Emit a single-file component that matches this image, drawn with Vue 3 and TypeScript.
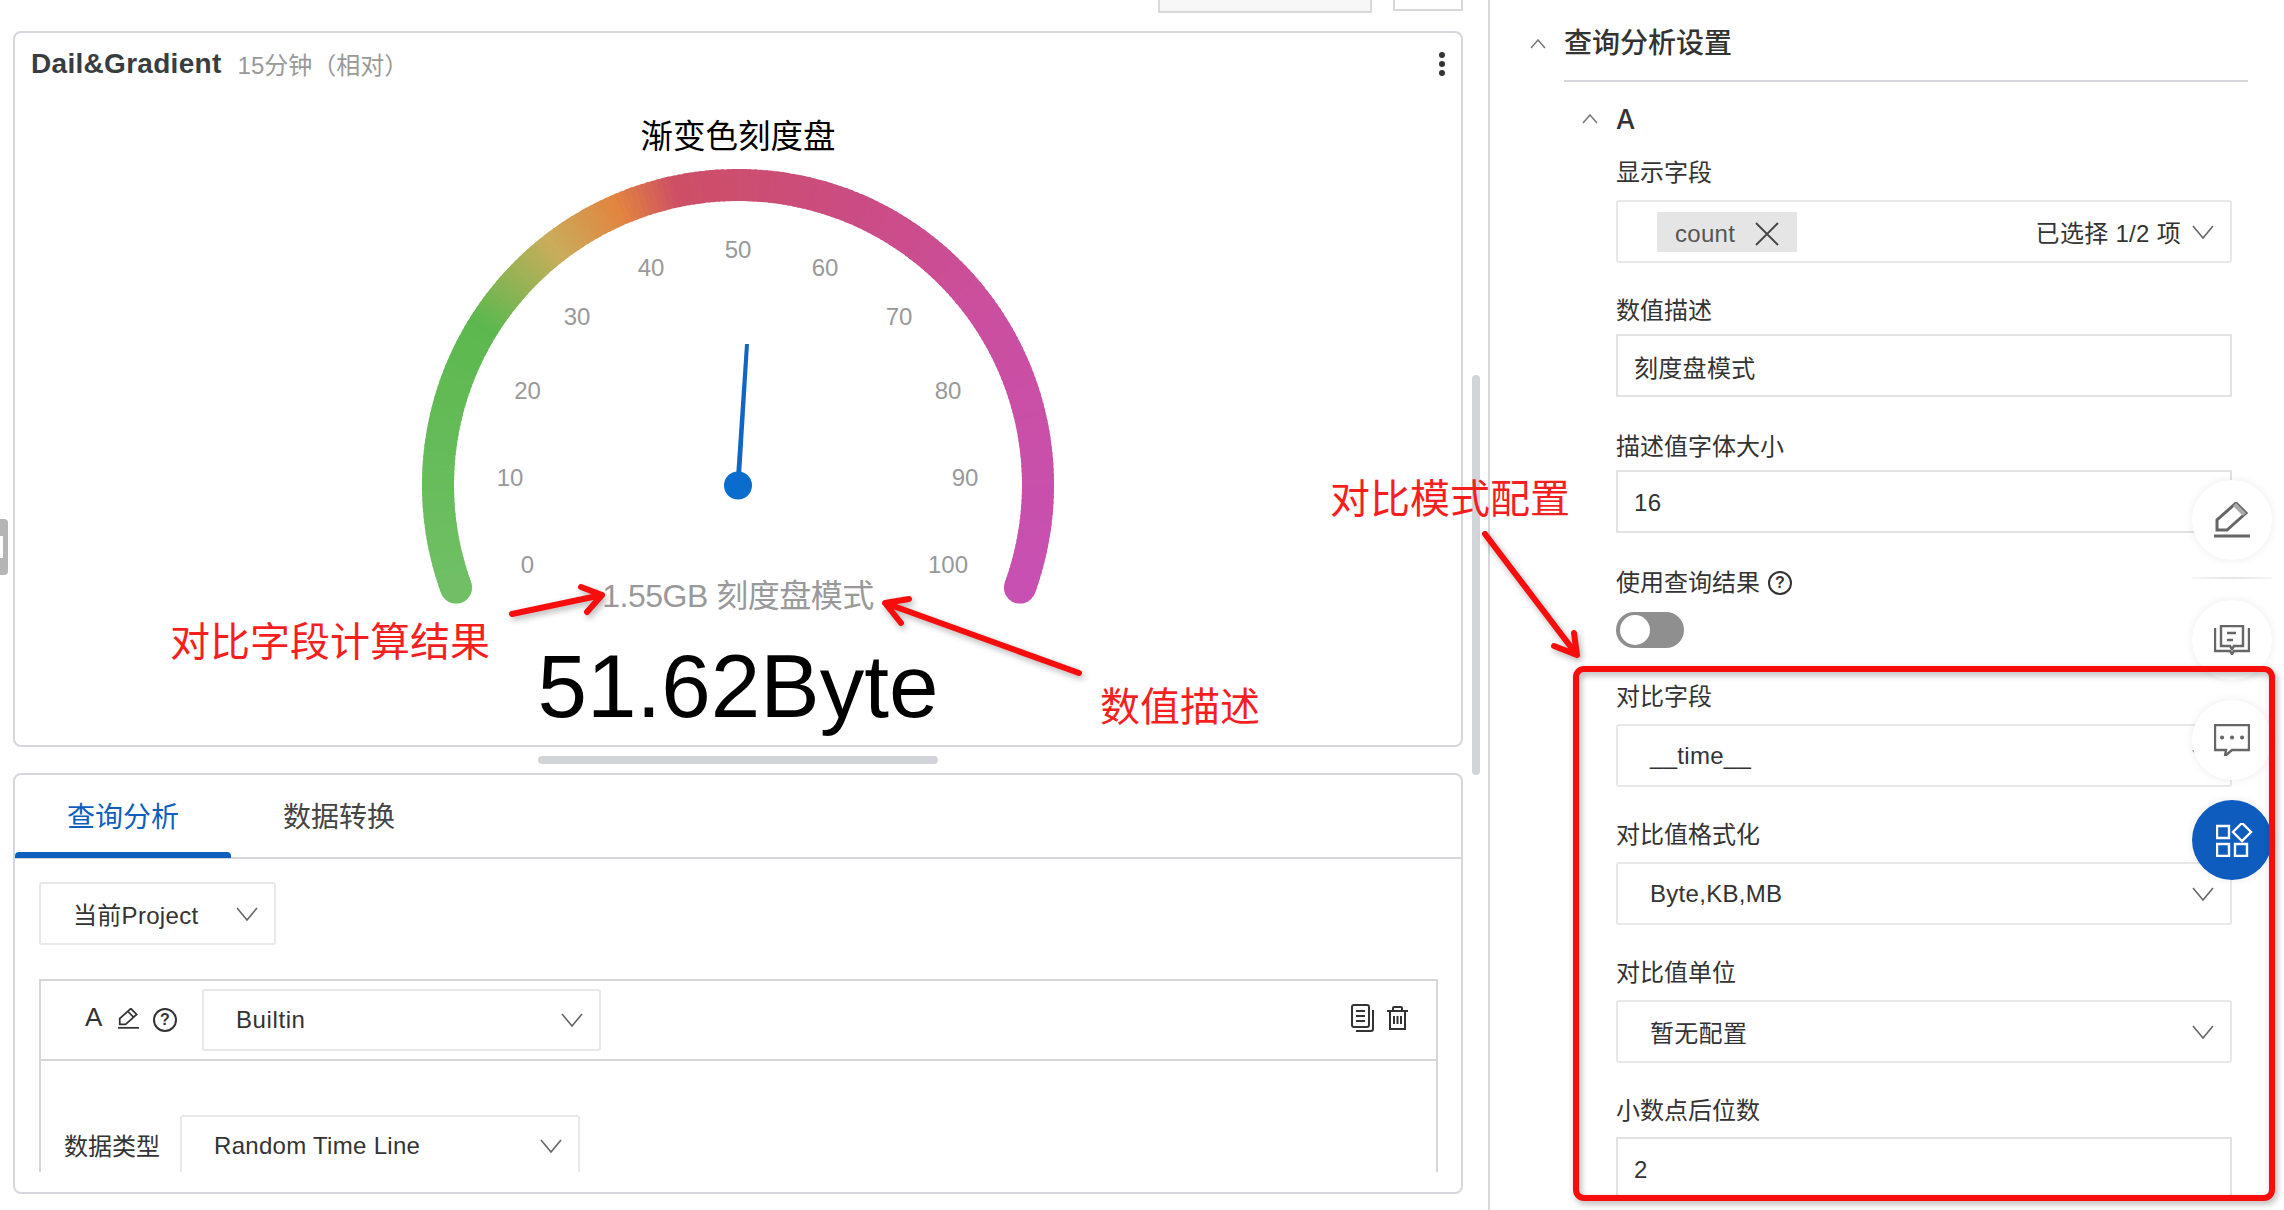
<script setup lang="ts">
import { computed } from 'vue';

interface FormField {
  label: string;
  kind: 'select' | 'input';
  value: string;
}

const ticks = [
  { label: '0', x: 527.5, y: 564 },
  { label: '10', x: 510, y: 477.5 },
  { label: '20', x: 527.5, y: 390.5 },
  { label: '30', x: 577, y: 316 },
  { label: '40', x: 651, y: 267.5 },
  { label: '50', x: 738, y: 249.5 },
  { label: '60', x: 825, y: 267.5 },
  { label: '70', x: 899, y: 316 },
  { label: '80', x: 948, y: 390.5 },
  { label: '90', x: 965, y: 477.5 },
  { label: '100', x: 948, y: 564 },
];

const upperFields: FormField[] = [
  { label: '数值描述', kind: 'input', value: '刻度盘模式' },
  { label: '描述值字体大小', kind: 'input', value: '16' },
];

const compareFields: FormField[] = [
  { label: '对比字段', kind: 'select', value: '__time__' },
  { label: '对比值格式化', kind: 'select', value: 'Byte,KB,MB' },
  { label: '对比值单位', kind: 'select', value: '暂无配置' },
  { label: '小数点后位数', kind: 'input', value: '2' },
];

// gauge sweep: 200deg to -20deg
const CX = 738;
const CY = 485;
const R = 300;

const stops: [number, number[]][] = [
  [0, [112, 191, 101]],
  [0.235, [92, 184, 78]],
  [0.325, [201, 173, 91]],
  [0.392, [226, 132, 63]],
  [0.444, [205, 79, 101]],
  [0.586, [203, 76, 128]],
  [0.75, [203, 79, 159]],
  [1, [199, 80, 178]],
];

function colorAt(t: number) {
  let i = 0;
  while (i < stops.length - 2 && t > stops[i + 1][0]) i++;
  const [t0, c0] = stops[i];
  const [t1, c1] = stops[i + 1];
  const k = (t - t0) / (t1 - t0);
  const mix = c0.map((c, n) => Math.round(c + (c1[n] - c) * k));
  return `rgb(${mix.join(',')})`;
}

function point(deg: number) {
  const a = (deg * Math.PI) / 180;
  return { x: CX + R * Math.cos(a), y: CY - R * Math.sin(a) };
}

const arcStart = point(200);
const arcEnd = point(-20);

const segments = computed(() => {
  const count = 220;
  return Array.from({ length: count }, (_, i) => {
    const from = point(200 - (220 * i) / count);
    const to = point(200 - (220 * Math.min(i + 1.4, count)) / count);
    return {
      d: `M${from.x.toFixed(2)} ${from.y.toFixed(2)}A${R} ${R} 0 0 1 ${to.x.toFixed(2)} ${to.y.toFixed(2)}`,
      color: colorAt(i / count),
    };
  });
});
</script>

<template>
  <div class="page">
    <div class="left">
      <div class="toolbar">
        <div class="stub stub-wide" />
        <div class="stub stub-small" />
      </div>

      <section class="chart-card">
        <header class="chart-head">
          <span class="chart-title">Dail&amp;Gradient</span>
          <span class="chart-range">15分钟（相对）</span>
          <span class="dots"><i /><i /><i /></span>
        </header>
        <svg class="gauge" viewBox="15 100 1445 645">
          <text class="gauge-name" x="738" y="148" text-anchor="middle">渐变色刻度盘</text>
          <path v-for="(s, i) in segments" :key="i" :d="s.d" :stroke="s.color" stroke-width="32" fill="none" />
          <circle :cx="arcStart.x" :cy="arcStart.y" r="16" :fill="colorAt(0)" />
          <circle :cx="arcEnd.x" :cy="arcEnd.y" r="16" :fill="colorAt(1)" />
          <text
            v-for="t in ticks"
            :key="t.label"
            class="tick"
            :x="t.x"
            :y="t.y + 8.5"
            text-anchor="middle"
          >{{ t.label }}</text>
          <polygon points="735.5,485 740.5,485 749,344 745,344" fill="#1166c4" />
          <circle cx="738" cy="485.5" r="14" fill="#0a6ccc" />
          <text class="gauge-sub" x="738" y="607" text-anchor="middle">1.55GB 刻度盘模式</text>
          <text class="gauge-value" x="738" y="717" text-anchor="middle">51.62Byte</text>
        </svg>
      </section>

      <div class="hscroll" />

      <section class="query-card">
        <nav class="tabs">
          <span class="tab active">查询分析</span>
          <span class="tab">数据转换</span>
        </nav>
        <div class="query-body">
          <div class="select project">
            <span>当前Project</span>
            <svg class="chevron" viewBox="0 0 22 14"><path d="M1 1l10 12L21 1" /></svg>
          </div>
          <div class="query-box">
            <div class="query-row">
              <span class="query-name">A</span>
              <svg class="pencil small" viewBox="0 0 36 36">
                <path d="M3 28V18L22 1l10 10-19 17z" />
                <path d="M17 6l10 10" />
                <path d="M0 34h36" />
              </svg>
              <span class="help">?</span>
              <div class="select builtin">
                <span>Builtin</span>
                <svg class="chevron" viewBox="0 0 22 14"><path d="M1 1l10 12L21 1" /></svg>
              </div>
              <svg class="row-icon copy" viewBox="0 0 24 28">
                <rect x="1" y="1" width="17" height="22" rx="2" />
                <path d="M5 7h9M5 12h9M5 17h9" />
                <path d="M22 6v19a2 2 0 0 1-2 2H5" />
              </svg>
              <svg class="row-icon trash" viewBox="0 0 21 24">
                <path d="M0 5h21" />
                <path d="M6 5V2a1 1 0 0 1 1-1h7a1 1 0 0 1 1 1v3" />
                <path d="M3 5v18h15V5" />
                <path d="M7 10v8M10.5 10v8M14 10v8" />
              </svg>
            </div>
            <div class="type-row">
              <span class="type-label">数据类型</span>
              <div class="select random">
                <span>Random Time Line</span>
                <svg class="chevron" viewBox="0 0 22 14"><path d="M1 1l10 12L21 1" /></svg>
              </div>
            </div>
          </div>
        </div>
      </section>

      <div class="vscroll" />
    </div>

    <aside class="right">
      <div class="section-head">
        <svg class="caret" viewBox="0 0 16 10"><path d="M1 9l7-8 7 8" /></svg>
        <h2 class="section-title">查询分析设置</h2>
      </div>
      <div class="sub-head">
        <svg class="caret" viewBox="0 0 16 10"><path d="M1 9l7-8 7 8" /></svg>
        <span class="sub-title">A</span>
      </div>

      <div class="form">
        <div class="field is-select">
          <label class="field-label">显示字段</label>
          <div class="select tags">
            <span class="chip">
              count
              <svg class="chip-x" viewBox="0 0 24 24"><path d="M1 1l22 22M23 1L1 23" /></svg>
            </span>
            <span class="picked">已选择 1/2 项</span>
            <svg class="chevron" viewBox="0 0 22 14"><path d="M1 1l10 12L21 1" /></svg>
          </div>
        </div>

        <div v-for="f in upperFields" :key="f.label" class="field is-input">
          <label class="field-label">{{ f.label }}</label>
          <div class="input">{{ f.value }}</div>
        </div>

        <div class="field is-toggle">
          <label class="field-label">使用查询结果 <span class="help">?</span></label>
          <div class="toggle"><i /></div>
        </div>

        <div
          v-for="f in compareFields"
          :key="f.label"
          class="field"
          :class="f.kind === 'select' ? 'is-select' : 'is-input'"
        >
          <label class="field-label">{{ f.label }}</label>
          <div v-if="f.kind === 'select'" class="select">
            <span>{{ f.value }}</span>
            <svg class="chevron" viewBox="0 0 22 14"><path d="M1 1l10 12L21 1" /></svg>
          </div>
          <div v-else class="input">{{ f.value }}</div>
        </div>
      </div>
    </aside>

    <div class="float-tools">
      <button class="fab">
        <svg class="pencil" viewBox="0 0 36 36">
          <path d="M3 28V18L22 1l10 10-19 17z" />
          <path class="eraser" d="M19 4l10 10 3-3L22 1z" />
          <path d="M0 34h36" />
        </svg>
      </button>
      <button class="fab">
        <svg class="fab-icon" viewBox="0 0 36 30">
          <path d="M1 3v23h15l2 3 2-3h15V3" />
          <path d="M7 1v20h9l2 3 2-3h9V1z" />
          <path d="M13 8h9M13 15h6" />
        </svg>
      </button>
      <button class="fab">
        <svg class="fab-icon" viewBox="0 0 36 32">
          <path d="M1 1h34v25H18l-7 6 1-6H1z" />
          <path class="dot-line" d="M8 13.5h.1M18 13.5h.1M28 13.5h.1" />
        </svg>
      </button>
      <button class="fab primary">
        <svg class="fab-icon" viewBox="0 0 38 34">
          <path d="M1 3h12v12H1z" />
          <path d="M1 21h12v12H1zM19 21h12v12H19z" />
          <path d="M26 0l9 9-9 9-9-9z" />
        </svg>
      </button>
    </div>

    <div class="left-handle"><i /></div>

    <svg class="annotations" viewBox="0 0 2284 1210">
      <g class="marks">
        <rect x="1576" y="669" width="696" height="529" rx="8" />
        <path d="M512 614L602 595M581 587L602 595L587 612" />
        <path d="M1079 673L885 603M909 599L885 603L901 623" />
        <path d="M1485 534L1577 655M1574 633L1577 655L1554 646" />
      </g>
      <text class="note" x="170" y="656">对比字段计算结果</text>
      <text class="note" x="1100" y="721">数值描述</text>
      <text class="note" x="1330" y="513">对比模式配置</text>
    </svg>
  </div>
</template>

<style scoped>
.page {
  position: relative;
  display: flex;
  width: 2284px;
  height: 1210px;
  overflow: hidden;
  background: #fff;
  color: #333;
  font-family: "Liberation Sans", "Noto Sans CJK SC", sans-serif;
  font-size: 24px;
  letter-spacing: 0.3px;
}

/* left column */
.left {
  position: relative;
  box-sizing: border-box;
  display: flex;
  flex-direction: column;
  width: 1490px;
  padding: 0 25px 0 13px;
  border-right: 2px solid #d5d7dc;
}
.toolbar {
  display: flex;
  justify-content: flex-end;
  align-items: flex-start;
  gap: 21px;
  height: 13px;
  margin-bottom: 18px;
}
.stub {
  box-sizing: border-box;
  border: 2px solid #d9d9d9;
  border-top: none;
}
.stub-wide { width: 214px; height: 13px; background: #f7f7f7; }
.stub-small { width: 70px; height: 11px; }

.chart-card {
  box-sizing: border-box;
  height: 716px;
  border: 2px solid #d5d7dc;
  border-radius: 8px;
}
.chart-head {
  display: flex;
  align-items: center;
  height: 67px;
  padding: 0 16px;
  position: relative;
  top: -3px;
}
.chart-title { font-size: 28px; font-weight: 700; color: #373d41; }
.chart-range { margin-left: 16px; font-size: 24px; color: #999; letter-spacing: 0; }
.dots {
  display: flex;
  flex-direction: column;
  gap: 3px;
  margin-left: auto;
}
.dots i { width: 6px; height: 6px; border-radius: 50%; background: #333; }
.gauge { display: block; width: 1445px; height: 645px; letter-spacing: 0; }
.gauge-name { font-size: 32.5px; fill: #000; }
.tick { font-size: 24px; fill: #999; }
.gauge-sub { font-size: 32px; fill: #999; letter-spacing: -0.5px; }
.gauge-value { font-size: 89px; fill: #000; }

.hscroll {
  width: 400px;
  height: 8px;
  margin: 9px auto;
  border-radius: 4px;
  background: #d1d4d9;
}
.vscroll {
  position: absolute;
  left: 1472px;
  top: 375px;
  width: 8px;
  height: 400px;
  border-radius: 4px;
  background: #d1d4d9;
}

.query-card {
  box-sizing: border-box;
  height: 421px;
  border: 2px solid #d5d7dc;
  border-radius: 8px;
  overflow: hidden;
}
.tabs {
  display: flex;
  height: 84px;
  box-sizing: border-box;
  padding-left: 0;
  border-bottom: 2px solid #d5d7dc;
}
.tab {
  position: relative;
  display: flex;
  align-items: center;
  padding: 0 52px 3px 52px;
  font-size: 28px;
  color: #444;
  letter-spacing: 0;
}
.tab.active { color: #0f5fbf; }
.tab.active::after {
  content: "";
  position: absolute;
  left: 0;
  right: 0;
  bottom: -1px;
  height: 6px;
  border-radius: 4px 4px 0 0;
  background: #0f5fbf;
}
.query-body { padding: 23px 23px 0 24px; }

.select {
  box-sizing: border-box;
  display: flex;
  align-items: center;
  justify-content: space-between;
  height: 62px;
  padding: 0 16px 0 32px;
  border: 2px solid #e8e8e8;
  border-radius: 3px;
  background: #fff;
}
.chevron {
  flex: none;
  width: 22px;
  height: 14px;
  fill: none;
  stroke: #666;
  stroke-width: 1.6;
}
.project { width: 237px; height: 63px; }
.query-box {
  height: 191px;
  margin-top: 34px;
  border: 2px solid #d5d7d7;
  border-bottom: none;
  overflow: hidden;
}
.query-row {
  box-sizing: border-box;
  display: flex;
  align-items: center;
  height: 80px;
  padding-left: 44px;
  padding-right: 28px;
  border-bottom: 2px solid #d5d7d7;
}
.query-name { width: 17px; margin-top: -6px; font-size: 26px; letter-spacing: 0; }
.pencil {
  width: 36px;
  height: 36px;
  fill: none;
  stroke: #666;
  stroke-width: 3;
}
.pencil.small {
  width: 21px;
  height: 21px;
  margin-left: 16px;
  margin-top: -4px;
  stroke: #333;
}
.eraser { fill: #aaa; stroke: none; }
.help {
  box-sizing: border-box;
  display: inline-flex;
  align-items: center;
  justify-content: center;
  width: 24px;
  height: 24px;
  border: 2px solid #333;
  border-radius: 50%;
  font-size: 16px;
  font-weight: 700;
  letter-spacing: 0;
}
.query-row .help { margin-left: 14px; }
.builtin { width: 399px; margin-left: 25px; }
.builtin span { letter-spacing: 0.6px; }
.row-icon { fill: none; stroke: #333; stroke-width: 2; }
.copy { width: 24px; height: 28px; margin-left: auto; margin-top: -4px; }
.trash { width: 21px; height: 24px; margin-left: 12px; margin-top: -4px; }
.type-row {
  display: flex;
  align-items: center;
  gap: 20px;
  margin-top: 54px;
  padding-left: 23px;
}
.type-label { margin-top: -3px; letter-spacing: 0; }
.random { width: 400px; }

/* right panel */
.right {
  box-sizing: border-box;
  flex: 1;
  height: 1196px;
  padding: 0 36px 0 40px;
  overflow: hidden;
}
.section-head {
  display: flex;
  align-items: flex-start;
  gap: 18px;
}
.section-head .caret { margin-top: 39px; }
.caret {
  flex: none;
  width: 16px;
  height: 10px;
  fill: none;
  stroke: #777;
  stroke-width: 1.5;
}
.section-title {
  flex: 1;
  margin: 0;
  padding: 26px 0 18px;
  border-bottom: 2px solid #d5d7dc;
  font-size: 28px;
  line-height: 36px;
  font-weight: 500;
  letter-spacing: 0;
}
.sub-head {
  display: flex;
  align-items: center;
  gap: 18px;
  height: 36px;
  margin-top: 19px;
  padding-left: 52px;
}
.sub-title { font-family: Inter, sans-serif; font-size: 27px; font-weight: 500; letter-spacing: 0; }
.form { margin: 20px 16px 0 86px; }
.form .select { height: 63px; }
.field { margin-bottom: 32px; }
.field-label {
  display: flex;
  align-items: center;
  gap: 8px;
  line-height: 32px;
  color: #333;
  letter-spacing: 0;
}
.is-select .field-label { margin-bottom: 11px; }
.is-input { margin-bottom: 34px; }
.is-input .field-label { margin-bottom: 7px; }
.is-input:last-child .field-label { margin-bottom: 10px; }
.is-toggle { margin-bottom: 33px; }
.is-toggle .field-label { margin-bottom: 13px; }
.input {
  box-sizing: border-box;
  display: flex;
  align-items: center;
  height: 63px;
  padding: 2px 0 0 16px;
  border: 2px solid #e2e2e2;
}
.tags { padding-left: 39px; }
.chip {
  box-sizing: border-box;
  display: flex;
  align-items: center;
  gap: 20px;
  height: 40px;
  padding: 4px 18px 0;
  background: #e5e5e5;
  color: #555;
}
.chip-x {
  width: 24px;
  height: 24px;
  fill: none;
  stroke: #444;
  stroke-width: 1.8;
}
.picked { margin-left: auto; margin-right: 11px; }
.toggle {
  box-sizing: border-box;
  width: 68px;
  height: 36px;
  padding: 3px 4px;
  border-radius: 18px;
  background: #8f8f8f;
}
.toggle i { display: block; width: 30px; height: 30px; border-radius: 50%; background: #fff; }

/* floating actions */
.float-tools {
  position: absolute;
  left: 2192px;
  top: 480px;
  display: flex;
  flex-direction: column;
  gap: 20px;
}
.fab {
  position: relative;
  display: flex;
  align-items: center;
  justify-content: center;
  width: 80px;
  height: 80px;
  padding: 0;
  border: none;
  border-radius: 50%;
  background: #fff;
  box-shadow: 0 0 10px rgba(0, 0, 0, 0.08);
}
.fab:first-child { margin-bottom: 20px; }
.fab:first-child::after {
  content: "";
  position: absolute;
  left: 0;
  right: 0;
  bottom: -19px;
  height: 2px;
  background: linear-gradient(90deg, #f6f6f6, #e4e4e4, #f6f6f6);
}
.fab-icon {
  width: 36px;
  fill: none;
  stroke: #666;
  stroke-width: 2.4;
}
.dot-line { stroke-width: 4; stroke-linecap: round; }
.primary { background: #0f5cbf; }
.primary .fab-icon { width: 38px; margin-left: 6px; stroke: #fff; }

.left-handle {
  position: absolute;
  left: 0;
  top: 519px;
  width: 8px;
  height: 56px;
  border-radius: 0 4px 4px 0;
  background: #b5b5b5;
}
.left-handle i {
  position: absolute;
  left: 0;
  top: 17px;
  width: 3px;
  height: 22px;
  background: #fff;
}

/* red review marks drawn over the screenshot */
.annotations {
  position: absolute;
  left: 0;
  top: 0;
  width: 2284px;
  height: 1210px;
  pointer-events: none;
  letter-spacing: 0;
}
.marks {
  fill: none;
  stroke: #f80d0d;
  stroke-width: 6;
  stroke-linecap: round;
  stroke-linejoin: round;
  filter: drop-shadow(2px 3px 3px rgba(0, 0, 0, 0.3));
}
.note { font-size: 40px; fill: #f51f1f; }
</style>
